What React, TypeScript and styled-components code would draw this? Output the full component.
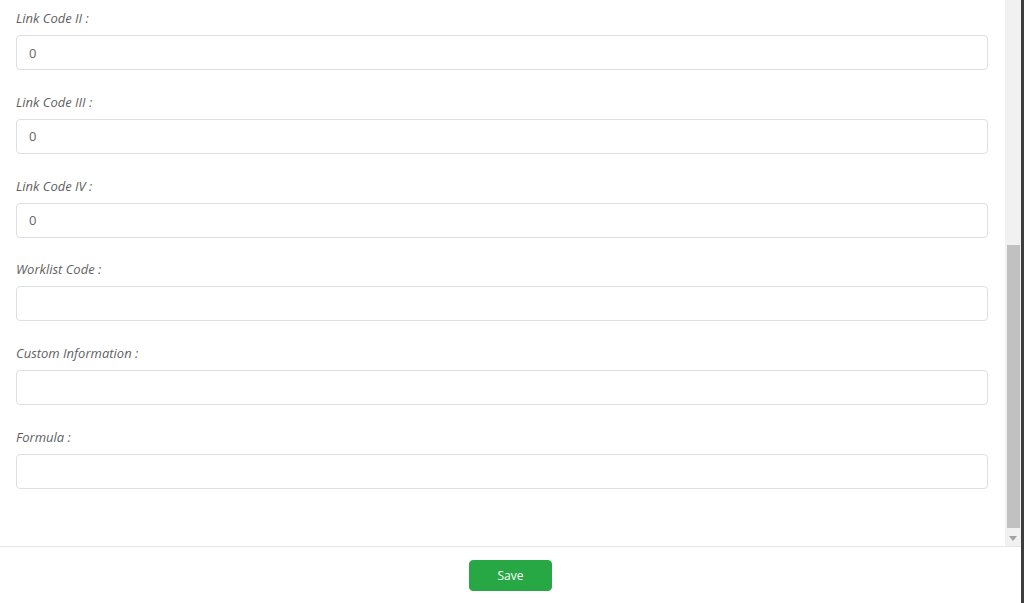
import React from 'react';
import styled, { createGlobalStyle } from 'styled-components';

const GlobalStyle = createGlobalStyle`
  html, body {
    margin: 0;
    padding: 0;
    background: #ffffff;
    font-family: 'Open Sans', 'Noto Sans', sans-serif;
  }
`;

type FieldType = {
  label: string;
  value: string;
};

const fields: FieldType[] = [
  { label: 'Link Code II :', value: '0' },
  { label: 'Link Code III :', value: '0' },
  { label: 'Link Code IV :', value: '0' },
  { label: 'Worklist Code :', value: '' },
  { label: 'Custom Information :', value: '' },
  { label: 'Formula :', value: '' },
];

const App = () => {
  return (
    <>
      <GlobalStyle />
      <Frame>
        <Body>
          <Form>
            {fields.map((f) => (
              <FieldGroup key={f.label}>
                <Label>{f.label}</Label>
                <Input type='text' defaultValue={f.value} readOnly />
              </FieldGroup>
            ))}
          </Form>

          <ScrollTrack>
            <ScrollSpacer />
            <ScrollThumb />
            <ScrollArrow>
              <svg width='8' height='5' viewBox='0 0 8 5'>
                <path d='M0 0 L8 0 L4 5 Z' fill='#a3a3a3' />
              </svg>
            </ScrollArrow>
          </ScrollTrack>
        </Body>

        <Footer>
          <SaveButton type='button'>Save</SaveButton>
        </Footer>
      </Frame>
    </>
  );
};

export default App;

const Frame = styled.div`
  width: 1024px;
  height: 603px;
  box-sizing: border-box;
  border-right: 3px solid #3d3d3d;
  display: flex;
  flex-direction: column;
  overflow: hidden;
`;

const Body = styled.div`
  height: 546px;
  display: flex;
  flex-direction: row;
`;

const Form = styled.div`
  flex: 1;
  padding: 9px 17px 0 16px;
  display: flex;
  flex-direction: column;
  gap: 22.8px;
`;

const FieldGroup = styled.div`
  display: flex;
  flex-direction: column;
`;

const Label = styled.label`
  font-size: 13px;
  line-height: 18px;
  font-style: italic;
  color: #5f5f5f;
  margin-bottom: 8px;
`;

const Input = styled.input`
  height: 35px;
  box-sizing: border-box;
  border: 1px solid #dcdfe3;
  border-radius: 4px;
  padding: 0 12px;
  font-family: 'Open Sans', 'Noto Sans', sans-serif;
  font-size: 13px;
  color: #666666;
  outline: none;
  background: #ffffff;
`;

const ScrollTrack = styled.div`
  width: 16px;
  background: #f1f1f1;
  display: flex;
  flex-direction: column;
  align-items: center;
`;

const ScrollSpacer = styled.div`
  flex: 1;
`;

const ScrollThumb = styled.div`
  width: 13px;
  height: 283px;
  margin-left: 1px;
  background: #c1c1c1;
  margin-bottom: 2px;
`;

const ScrollArrow = styled.div`
  height: 16px;
  width: 16px;
  display: flex;
  align-items: center;
  justify-content: center;
`;

const Footer = styled.div`
  flex: 1;
  border-top: 1px solid #e5e5e5;
  display: flex;
  align-items: center;
  justify-content: center;
`;

const SaveButton = styled.button`
  width: 83px;
  height: 31px;
  background: #28a745;
  border: 1px solid #28a745;
  border-radius: 4px;
  color: #ffffff;
  font-family: 'Open Sans', 'Noto Sans', sans-serif;
  font-size: 12px;
  cursor: pointer;
`;
